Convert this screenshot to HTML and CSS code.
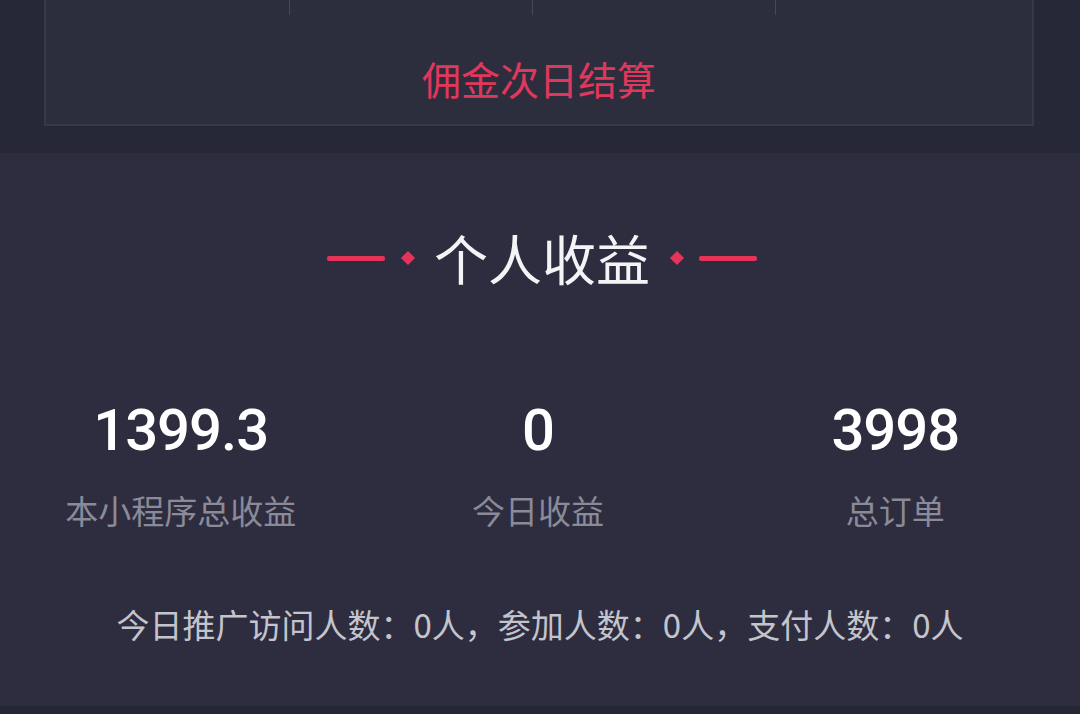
FILE: index.html
```html
<!DOCTYPE html>
<html lang="zh">
<head>
<meta charset="utf-8">
<link rel="stylesheet" href="styles.css">
</head>
<body>
<div class="top">
  <div class="card">
    <div class="cols">
      <div class="col"></div>
      <div class="col sep"></div>
      <div class="col sep"></div>
      <div class="col sep"></div>
    </div>
    <div class="notice">佣金次日结算</div>
  </div>
</div>
<div class="income">
  <div class="title-row">
    <span class="line"></span>
    <span class="dot-box left"><span class="dot"></span></span>
    <h2 class="title">个人收益</h2>
    <span class="dot-box right"><span class="dot"></span></span>
    <span class="line"></span>
  </div>
  <div class="stats">
    <div class="stat">
      <div class="num">1399.3</div>
      <div class="label">本小程序总收益</div>
    </div>
    <div class="stat">
      <div class="num">0</div>
      <div class="label">今日收益</div>
    </div>
    <div class="stat">
      <div class="num">3998</div>
      <div class="label">总订单</div>
    </div>
  </div>
  <p class="today">今日推广访问人数：0人，参加人数：0人，支付人数：0人</p>
</div>
<div class="bottom"></div>
</body>
</html>
```

FILE: styles.css
```css
html, body {
  margin: 0;
  padding: 0;
}
body {
  width: 1080px;
  height: 714px;
  overflow: hidden;
  background: #272836;
  font-family: "Noto Sans CJK SC", "Noto Sans", sans-serif;
}
.top {
  background: #272837;
  padding: 0 46px 27px 44px;
}
.card {
  background: #2d2e3d;
  border: 2px solid #383948;
  border-top: none;
  height: 126px;
  box-sizing: border-box;
}
.cols {
  display: grid;
  grid-template-columns: 243px 243px 243px 1fr;
  height: 15px;
}
.col.sep {
  border-left: 1px solid #474856;
}
.notice {
  margin-top: 38px;
  line-height: 50px;
  text-align: center;
  font-size: 39px;
  color: #e0375c;
}
.income {
  background: #2e2d40;
  padding: 75px 0 60px;
}
.title-row {
  display: flex;
  align-items: center;
  justify-content: center;
  height: 60px;
  padding-left: 4px;
}
.line {
  width: 58px;
  height: 5px;
  border-radius: 2px;
  background: #e5335a;
}
.dot-box {
  width: 13px;
  height: 13px;
  display: flex;
  align-items: center;
  justify-content: center;
}
.dot-box.left { margin: 0 20px 0 16px; }
.dot-box.right { margin: 0 16px 0 20px; }
.dot {
  width: 10px;
  height: 10px;
  background: #e5335a;
  transform: rotate(45deg);
}
.title {
  margin: 0;
  font-size: 54px;
  font-weight: 400;
  line-height: 60px;
  color: #f4f4f6;
}
.stats {
  display: grid;
  grid-template-columns: repeat(3, 1fr);
  margin-top: 107px;
  padding: 0 6px 0 2px;
}
.stat {
  text-align: center;
}
.num {
  font-family: Roboto, "Noto Sans", sans-serif;
  font-weight: 500;
  font-size: 58px;
  line-height: 70px;
  letter-spacing: -1px;
  color: #ffffff;
}
.label {
  margin-top: 23px;
  font-size: 33px;
  line-height: 44px;
  color: #8a8a98;
}
.today {
  margin: 70px 0 0;
  text-align: center;
  font-size: 33px;
  line-height: 44px;
  color: #c4c4cc;
}
.bottom {
  height: 8px;
  background: #262735;
}
```
